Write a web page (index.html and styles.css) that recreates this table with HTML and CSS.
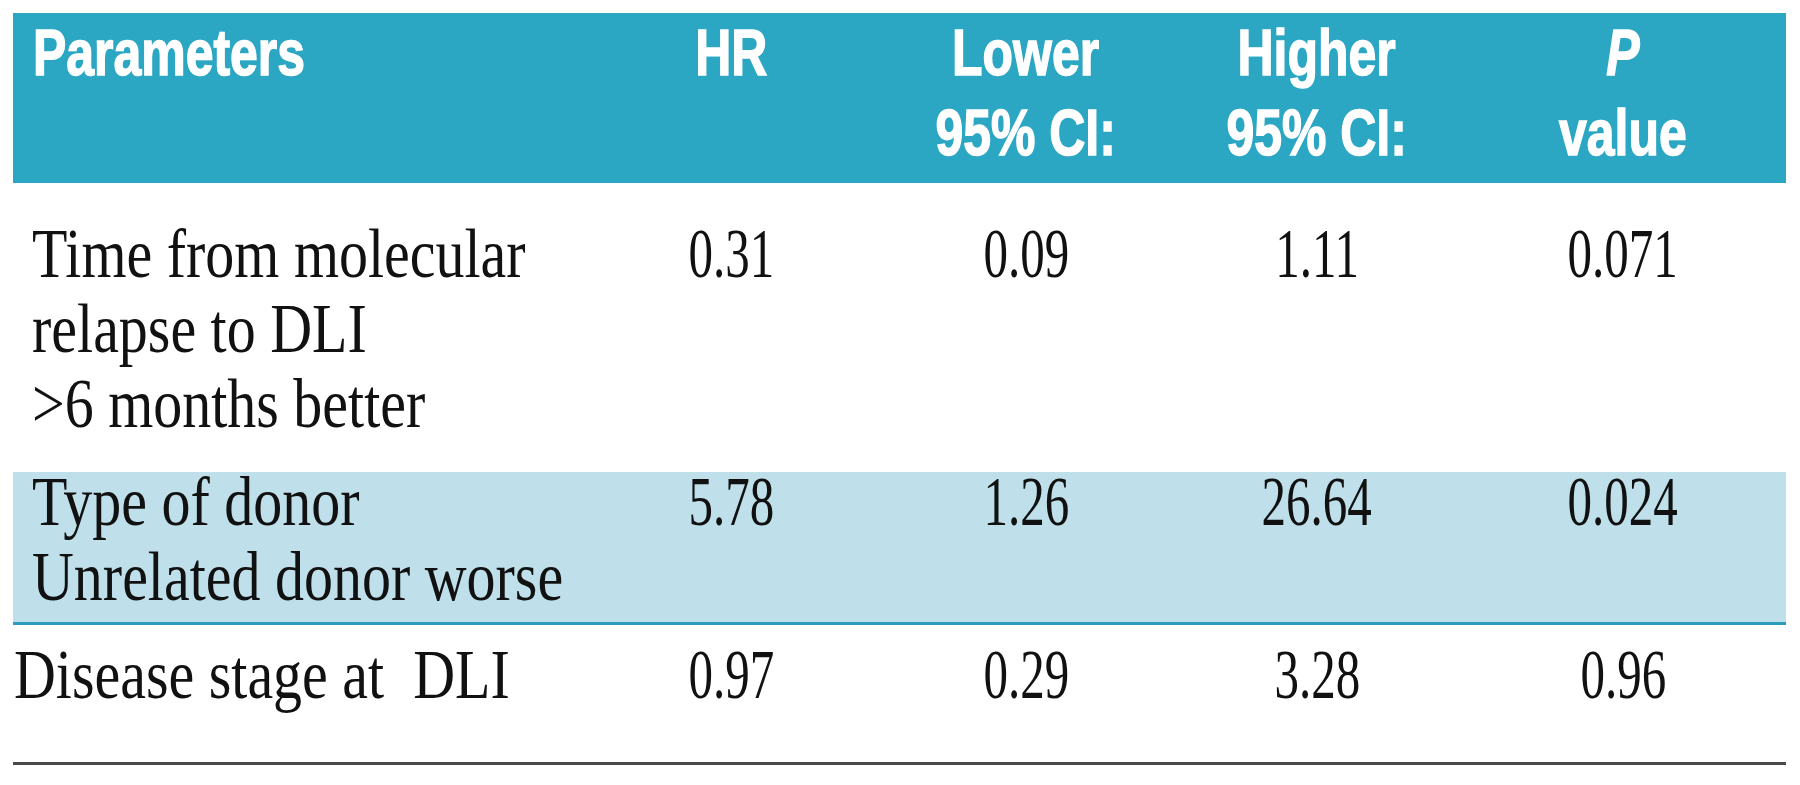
FILE: index.html
```html
<!DOCTYPE html>
<html lang="en">
<head>
<meta charset="utf-8">
<title>Multivariate analysis</title>
<link rel="stylesheet" href="styles.css">
</head>
<body>
<div class="page">
  <div class="table">
    <div class="row head">
      <div class="cell first"><span class="sq sq-l">Parameters</span></div>
      <div class="cell"><span class="sq">HR</span></div>
      <div class="cell"><span class="sq">Lower<br>95% CI:</span></div>
      <div class="cell"><span class="sq">Higher<br>95% CI:</span></div>
      <div class="cell"><span class="sq"><i>P</i><br>value</span></div>
    </div>
    <div class="row r1">
      <div class="cell first"><span class="tx">Time from molecular<br>relapse to DLI<br>&gt;6 months better</span></div>
      <div class="cell"><span class="num">0.31</span></div>
      <div class="cell"><span class="num">0.09</span></div>
      <div class="cell"><span class="num">1.11</span></div>
      <div class="cell"><span class="num">0.071</span></div>
    </div>
    <div class="row r2">
      <div class="cell first"><span class="tx">Type of donor<br>Unrelated donor worse</span></div>
      <div class="cell"><span class="num">5.78</span></div>
      <div class="cell"><span class="num">1.26</span></div>
      <div class="cell"><span class="num">26.64</span></div>
      <div class="cell"><span class="num">0.024</span></div>
    </div>
    <div class="row r3">
      <div class="cell first"><span class="tx">Disease stage at &nbsp;DLI</span></div>
      <div class="cell"><span class="num">0.97</span></div>
      <div class="cell"><span class="num">0.29</span></div>
      <div class="cell"><span class="num">3.28</span></div>
      <div class="cell"><span class="num">0.96</span></div>
    </div>
  </div>
</div>
</body>
</html>
```
FILE: styles.css
```css
html, body {
  margin: 0;
  padding: 0;
  background: #ffffff;
}

.page {
  padding: 13px 14px 0 13px;
}

.table {
  width: 1773px;
}

.row {
  display: grid;
  grid-template-columns: 571px 294px 296px 286px 326px;
  font-family: "Liberation Serif", "Times New Roman", serif;
  font-size: 69px;
  line-height: 75px;
  color: #111111;
}

.cell {
  text-align: center;
  white-space: nowrap;
}

.cell.first {
  text-align: left;
  padding-left: 19px;
}

.head {
  background: #2ba6c3;
  color: #ffffff;
  font-family: "Liberation Sans", Arial, sans-serif;
  font-weight: 700;
  font-size: 64px;
  line-height: 80px;
  padding: 0 0 10px 0;
  -webkit-text-stroke: 1.5px #ffffff;
}

.head .cell.first {
  padding-left: 20px;
}

.head i {
  font-style: italic;
}

.sq {
  display: inline-block;
  transform: scaleX(0.78);
  transform-origin: center top;
}

.sq-l {
  transform-origin: left top;
}

.tx {
  display: inline-block;
  transform: scaleX(0.84);
  transform-origin: left top;
}

.num {
  display: inline-block;
  transform: scaleX(0.71);
  transform-origin: center top;
}

.r1 {
  padding: 34px 0 30px 0;
}

.r2 {
  background: #bfe0eb;
  padding: 0 0 7px 0;
  border-bottom: 3px solid #2b9dba;
}

.r2 .cell {
  margin-top: -7px;
}

.r3 {
  padding: 13px 0 49px 0;
  border-bottom: 3px solid #4a4a4a;
}

.r3 .cell.first {
  padding-left: 1px;
}
```
